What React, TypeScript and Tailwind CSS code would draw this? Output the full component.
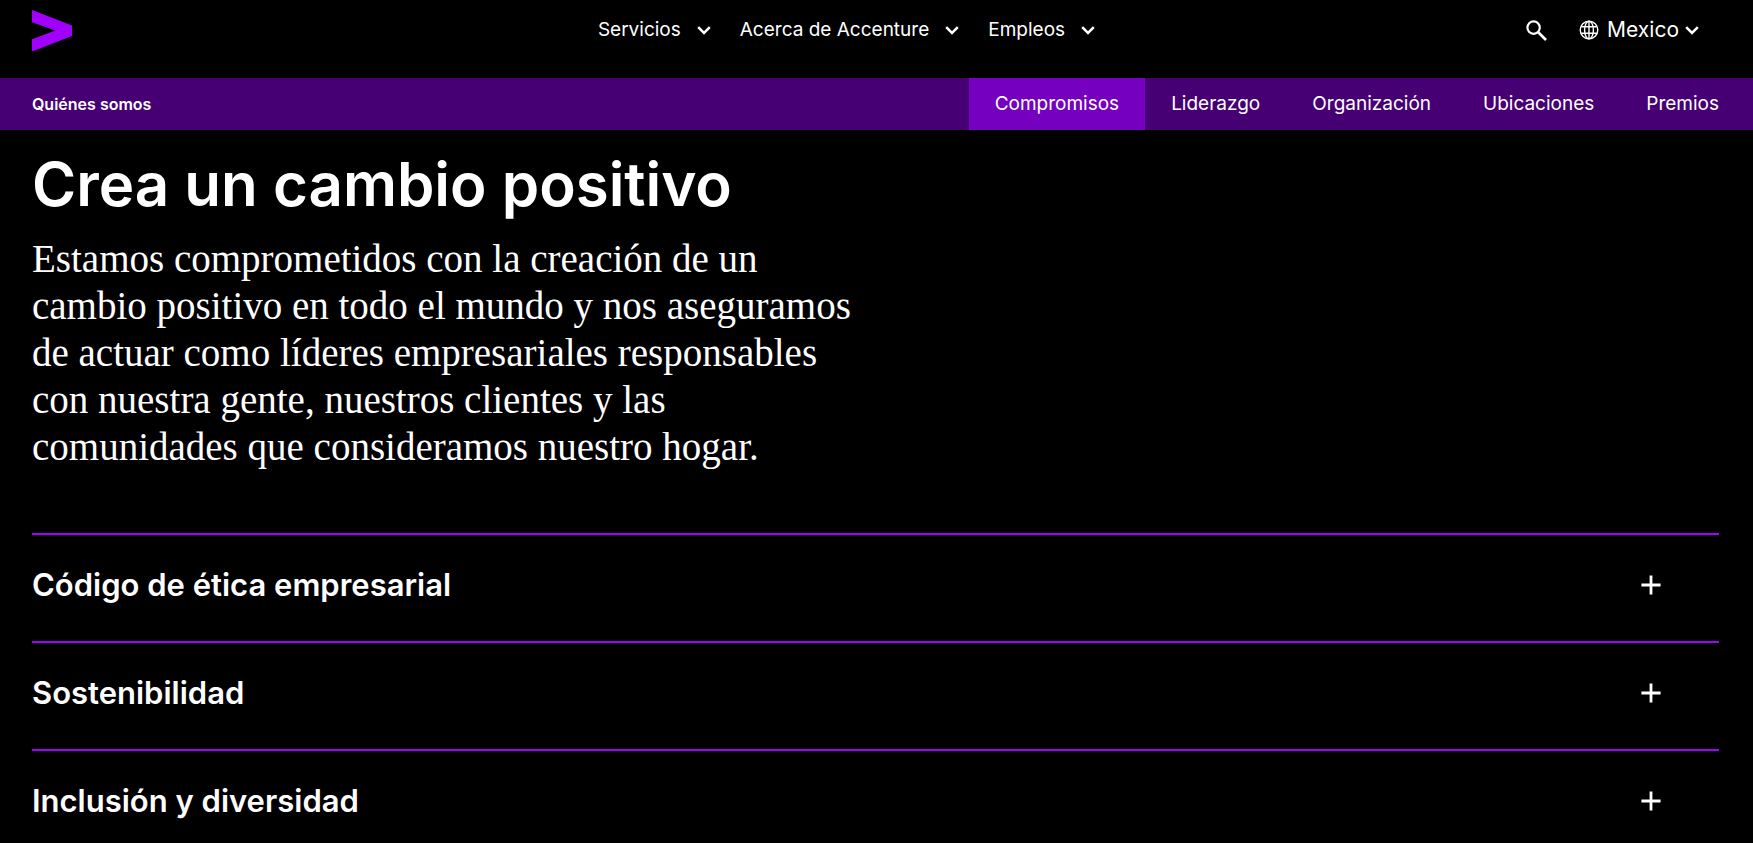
import { useState } from "react";

const menus = ["Servicios", "Acerca de Accenture", "Empleos"];
const tabs = ["Compromisos", "Liderazgo", "Organización", "Ubicaciones", "Premios"];
const topics = ["Código de ética empresarial", "Sostenibilidad", "Inclusión y diversidad"];

function Chevron() {
  return (
    <svg aria-hidden="true" viewBox="0 0 14 10" className="h-[10px] w-[14px]" fill="none" stroke="currentColor" strokeWidth="2.5">
      <path d="M1.2 2.2 7 8 12.8 2.2" />
    </svg>
  );
}

function Logo() {
  return (
    <svg viewBox="0 0 40 42" className="h-[42px] w-10" fill="#a100ff" aria-hidden="true">
      <path d="M0 0 40 15.6V26L0 41.6V29.2L23.4 20.6 0 12.2Z" />
    </svg>
  );
}

function SearchIcon() {
  return (
    <svg aria-hidden="true" viewBox="0 0 21 21" className="size-[21px]" fill="none" stroke="currentColor">
      <circle cx="7.6" cy="7.6" r="6.2" strokeWidth="2.2" />
      <path d="M12 12 20 20" strokeWidth="2.7" />
    </svg>
  );
}

function GlobeIcon() {
  return (
    <svg aria-hidden="true" viewBox="0 0 20 20" className="size-5" fill="none" stroke="currentColor" strokeWidth="1.4">
      <circle cx="10" cy="10" r="8.8" />
      <ellipse cx="10" cy="10" rx="4.4" ry="8.8" />
      <path d="M10 1.2V18.8M2.2 6.8H17.8M2.2 13.2H17.8" />
    </svg>
  );
}

function PlusIcon() {
  return (
    <svg aria-hidden="true" viewBox="0 0 20 20" className="size-5" fill="none" stroke="currentColor" strokeWidth="2.8">
      <path d="M10 .4V19.6M.4 10H19.6" />
    </svg>
  );
}

export default function App() {
  const [open, setOpen] = useState<string | null>(null);

  return (
    <div className="min-h-screen bg-black font-['Inter',sans-serif] text-white">
      <header className="flex h-[78px] items-start pt-[10px] pr-[54px] pl-8">
        <a href="#" aria-label="Accenture" className="shrink-0">
          <Logo />
        </a>
        <nav className="ml-[30vw] flex h-10 items-center gap-[29px] text-[19px] whitespace-nowrap">
          {menus.map((menu) => (
            <button key={menu} type="button" className="flex items-center gap-4">
              {menu}
              <Chevron />
            </button>
          ))}
        </nav>
        <div className="ml-auto flex h-10 items-center gap-8">
          <button type="button" aria-label="Buscar">
            <SearchIcon />
          </button>
          <button type="button" className="flex items-center gap-2 text-[21px]">
            <GlobeIcon />
            <span className="flex items-center gap-[6px]">
              Mexico
              <Chevron />
            </span>
          </button>
        </div>
      </header>

      <nav className="flex h-[52px] items-center justify-between bg-[#460073] pr-2 pl-8">
        <a href="#" className="text-base font-semibold">
          Quiénes somos
        </a>
        <div className="flex h-full text-[19px] whitespace-nowrap">
          {tabs.map((tab, i) => (
            <a key={tab} href="#" className={i === 0 ? "flex items-center bg-[#7500c0] px-[26px]" : "flex items-center px-[26px]"}>
              {tab}
            </a>
          ))}
        </div>
      </nav>

      <main className="pr-[34px] pl-8">
        <h1 className="pt-4 text-[60px] leading-[76px] font-semibold whitespace-nowrap">Crea un cambio positivo</h1>
        <p className="pt-[13px] font-['Liberation_Serif',serif] text-[39px] leading-[47px] whitespace-nowrap">
          Estamos comprometidos con la creación de un
          <br />
          cambio positivo en todo el mundo y nos aseguramos
          <br />
          de actuar como líderes empresariales responsables
          <br />
          con nuestra gente, nuestros clientes y las
          <br />
          comunidades que consideramos nuestro hogar.
        </p>
        <div className="mt-[63px]">
          {topics.map((topic) => (
            <h2 key={topic} className="border-t-2 border-[#a100ff]">
              <button
                type="button"
                aria-expanded={open === topic}
                onClick={() => setOpen(open === topic ? null : topic)}
                className="flex h-[106px] w-full items-center justify-between pr-[58px] pb-[6px] text-left text-[31px] font-semibold"
              >
                {topic}
                <PlusIcon />
              </button>
            </h2>
          ))}
        </div>
      </main>
    </div>
  );
}
